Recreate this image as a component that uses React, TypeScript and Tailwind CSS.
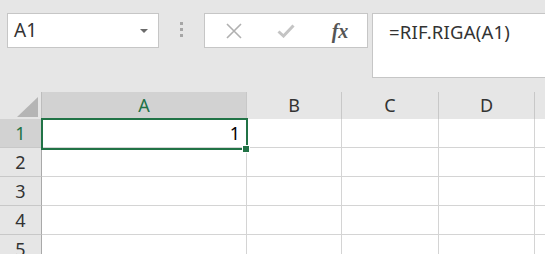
import React from 'react';

const font = { fontFamily: '"Noto Sans", "Open Sans", Arial, sans-serif' };

const cols = [
  { name: 'A', w: 'w-[205px]' },
  { name: 'B', w: 'w-[95px]' },
  { name: 'C', w: 'w-[97px]' },
  { name: 'D', w: 'w-[96px]' },
  { name: '', w: 'w-[60px]' },
];

const rows = [1, 2, 3, 4, 5];

const App: React.FC = () => {
  return (
    <div className="w-[545px] h-[254px] bg-[#e6e6e6] overflow-hidden relative" style={font}>
      {/* toolbar */}
      <div className="h-[92px] flex items-start pt-[13px]">
        <div className="ml-[7px] w-[152px] h-[35px] shrink-0 bg-white border border-[#c6c6c6] flex items-center justify-between pl-[6px] pr-[10px]">
          <span className="text-[19px] text-[#333]">A1</span>
          <svg width="8" height="4" viewBox="0 0 8 4"><path d="M0 0h8L4 4z" fill="#6b6b6b" /></svg>
        </div>
        <div className="w-[45px] shrink-0 flex flex-col items-center gap-[3px] pt-[9px]">
          <span className="w-[3px] h-[3px] bg-[#a6a6a6]" />
          <span className="w-[3px] h-[3px] bg-[#a6a6a6]" />
          <span className="w-[3px] h-[3px] bg-[#a6a6a6]" />
        </div>
        <div className="w-[164px] h-[35px] shrink-0 bg-white border border-[#c6c6c6] flex items-center">
          <div className="w-[54px] flex justify-center pl-[4px]">
            <svg width="16" height="16" viewBox="0 0 16 16"><path d="M1 1L15 15M15 1L1 15" stroke="#b0b0b0" strokeWidth="1.6" /></svg>
          </div>
          <div className="w-[54px] flex justify-center">
            <svg width="18" height="14" viewBox="0 0 18 14"><path d="M1.5 7.5L6.5 12L16.5 1.5" stroke="#c4c4c4" strokeWidth="3" fill="none" /></svg>
          </div>
          <div className="w-[54px] flex justify-center">
            <span className="text-[20px] italic font-semibold text-[#555] leading-none" style={{ fontFamily: '"Liberation Serif", "DejaVu Serif", serif' }}>fx</span>
          </div>
        </div>
        <div className="ml-[4px] flex-1 h-[65px] bg-white border border-r-0 border-[#c6c6c6] pl-[16px] pt-[4px]">
          <span className="text-[18.5px] text-[#333] tracking-[0.2px]">=RIF.RIGA(A1)</span>
        </div>
      </div>

      {/* grid */}
      <div className="relative">
        <div className="flex h-[27px]">
          <div className="w-[42px] shrink-0 border-r border-[#bdbdbd] flex items-end justify-end pb-[2px] pr-[3px]">
            <svg width="21" height="20" viewBox="0 0 21 20"><path d="M21 0V20H0z" fill="#b5b5b5" /></svg>
          </div>
          {cols.map((c, i) => (
            <div
              key={i}
              className={`${c.w} shrink-0 border-r border-[#c8c8c8] flex items-center justify-center text-[18px] ${
                i === 0 ? 'bg-[#d2d2d2] text-[#217346]' : 'text-[#333]'
              }`}
            >
              {c.name}
            </div>
          ))}
        </div>
        {rows.map((r) => (
          <div key={r} className="flex h-[29px]">
            <div
              className={`w-[42px] shrink-0 border-r border-b border-r-[#a9a9a9] border-b-[#c8c8c8] flex items-center justify-center text-[18px] ${
                r === 1 ? 'bg-[#d2d2d2] text-[#217346]' : 'text-[#333]'
              }`}
            >
              {r}
            </div>
            {cols.map((c, i) => (
              <div
                key={i}
                className={`${c.w} shrink-0 bg-white border-r border-b border-[#d4d4d4] flex items-center justify-end pr-[6px] text-[18px] text-black`}
              >
                {r === 1 && i === 0 ? '1' : ''}
              </div>
            ))}
          </div>
        ))}

        {/* selection */}
        <div className="absolute left-[41px] top-[26px] w-[207px] h-[32px] border-2 border-[#217346]" />
        <div className="absolute left-[242px] top-[53px] w-[8px] h-[8px] bg-[#217346] border border-white" />
      </div>
    </div>
  );
};

export default App;
